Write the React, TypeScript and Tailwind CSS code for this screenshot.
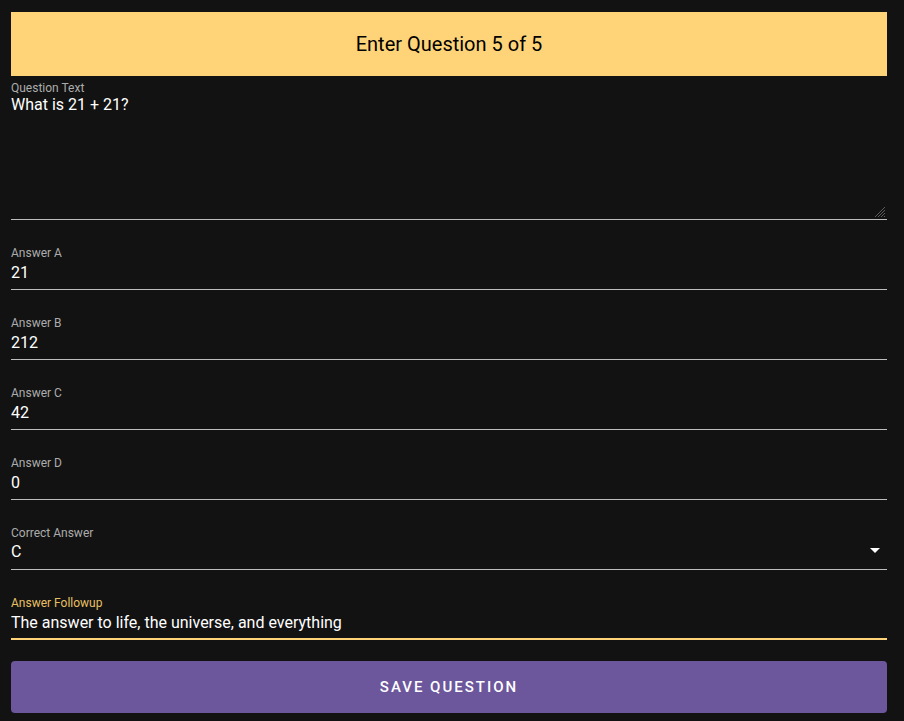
import { useState } from "react";

const answers = [
    { label: "Answer A", value: "21" },
    { label: "Answer B", value: "212" },
    { label: "Answer C", value: "42" },
    { label: "Answer D", value: "0" },
];

export default function App() {
    const [question, setQuestion] = useState("What is 21 + 21?");
    const [values, setValues] = useState(answers.map((a) => a.value));
    const [correct, setCorrect] = useState("C");
    const [followup, setFollowup] = useState("The answer to life, the universe, and everything");

    return (
        <div className="min-h-screen bg-[#121212] pl-[11px] pr-[17px] pt-3 pb-2 font-['Roboto',sans-serif]">
            <div className="h-16 bg-[#FFD479] flex items-center justify-center text-xl text-black">
                Enter Question 5 of 5
            </div>

            {/* question text */}
            <div className="mt-[5px] relative">
                <label className="block text-xs leading-[14px] text-[#acacac]">Question Text</label>
                <textarea
                    value={question}
                    onChange={(e) => setQuestion(e.target.value)}
                    className="block w-full h-[125px] bg-transparent text-base leading-5 text-white border-b border-[#bdbdbd] resize-none outline-none"
                />
                <svg className="absolute right-[1px] bottom-[2px]" width="12" height="12" viewBox="0 0 12 12">
                    <path d="M11 1L1 11M11 4L4 11M11 7L7 11M11 10L10 11" stroke="#5a5a5a" strokeWidth="1" />
                </svg>
            </div>

            {answers.map((a, i) => (
                <div key={a.label} className="mt-[26px]">
                    <label className="block text-xs leading-[14px] text-[#acacac]">{a.label}</label>
                    <input
                        value={values[i]}
                        onChange={(e) => {
                            const next = [...values];
                            next[i] = e.target.value;
                            setValues(next);
                        }}
                        className="block w-full h-[30px] pb-[5px] bg-transparent text-base leading-6 text-white border-b border-[#bdbdbd] outline-none"
                    />
                </div>
            ))}

            {/* correct answer */}
            <div className="mt-[26px]">
                <label className="block text-xs leading-[14px] text-[#acacac]">Correct Answer</label>
                <div className="relative">
                    <select
                        value={correct}
                        onChange={(e) => setCorrect(e.target.value)}
                        className="block w-full h-[30px] pb-[5px] bg-transparent text-base leading-6 text-white border-b border-[#bdbdbd] outline-none appearance-none"
                    >
                        <option className="bg-[#222]">A</option>
                        <option className="bg-[#222]">B</option>
                        <option className="bg-[#222]">C</option>
                        <option className="bg-[#222]">D</option>
                    </select>
                    <svg className="absolute right-0 top-[-2px] pointer-events-none" width="24" height="24" viewBox="0 0 24 24">
                        <path d="M7 10l5 5 5-5z" fill="#ffffff" />
                    </svg>
                </div>
            </div>

            {/* followup */}
            <div className="mt-[26px]">
                <label className="block text-xs leading-[14px] text-[#E8C064]">Answer Followup</label>
                <input
                    value={followup}
                    onChange={(e) => setFollowup(e.target.value)}
                    className="block w-full h-[30px] pb-[4px] bg-transparent text-base leading-6 text-white border-b-2 border-[#FFD479] outline-none"
                />
            </div>

            <button className="mt-[21px] w-full h-[52px] rounded bg-[#6C579C] text-white text-[15px] font-medium tracking-[2px] uppercase">
                Save Question
            </button>
        </div>
    );
}
